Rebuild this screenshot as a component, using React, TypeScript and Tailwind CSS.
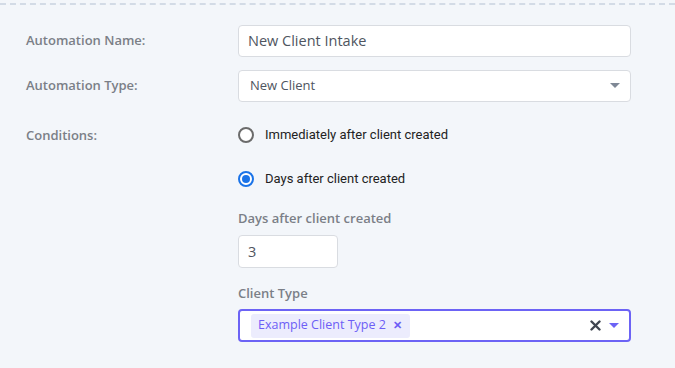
export default function App() {
  const label = "text-[13px] font-semibold text-[#7b7f87]";
  return (
    <div className="w-[675px] h-[368px] bg-[#f3f6fa] font-['Open_Sans',sans-serif] overflow-hidden">
      <div className="h-[3px]" />
      <div className="border-t-2 border-dashed border-[#d3dbe6]" />
      <div className="pl-[26px] pt-[20px] flex flex-col">
        {/* name */}
        <div className="flex items-center h-[32px]">
          <div className={`w-[212px] ${label}`}>Automation Name:</div>
          <div className="w-[393px] h-[32px] bg-white border border-[#d9dce1] rounded-[4px] flex items-center px-[9px] text-[14.5px] text-[#4f5560]">
            New Client Intake
          </div>
        </div>
        {/* type */}
        <div className="flex items-center h-[32px] mt-[13px]">
          <div className={`w-[212px] ${label}`}>Automation Type:</div>
          <div className="w-[393px] h-[32px] bg-white border border-[#d9dce1] rounded-[4px] flex items-center pl-[11px] pr-[10px] text-[13px] text-[#4f5560]">
            <span className="flex-1">New Client</span>
            <svg width="10" height="6" viewBox="0 0 10 6"><path d="M0 0h10L5 5z" fill="#7f8895" /></svg>
          </div>
        </div>
        {/* conditions */}
        <div className="flex mt-[23px]">
          <div className={`w-[212px] ${label} leading-[20px]`}>Conditions:</div>
          <div className="flex flex-col">
            <label className="flex items-center h-[20px] font-['Roboto',sans-serif] text-[13px] text-[#222]">
              <span className="w-[16px] h-[16px] rounded-full border-2 border-[#6b6b6b] bg-white mr-[11px]" />
              Immediately after client created
            </label>
            <label className="flex items-center h-[20px] mt-[24px] font-['Roboto',sans-serif] text-[13px] text-[#222]">
              <span className="w-[16px] h-[16px] rounded-full border-2 border-[#1a73e8] bg-white mr-[11px] flex items-center justify-center">
                <span className="w-[8px] h-[8px] rounded-full bg-[#1a73e8]" />
              </span>
              Days after client created
            </label>
            <div className={`${label} mt-[20px] leading-[18px]`}>Days after client created</div>
            <div className="w-[100px] h-[33px] mt-[8px] bg-white border border-[#d9dce1] rounded-[4px] flex items-center px-[9px] text-[14.5px] text-[#4f5560]">
              3
            </div>
            <div className={`${label} mt-[16px] leading-[18px]`}>Client Type</div>
            <div className="w-[393px] h-[33px] mt-[7px] bg-white border-2 border-[#6c63f5] rounded-[4px] flex items-center pl-[11px] pr-[10px]">
              <div className="flex-1 flex">
                <span className="h-[24px] bg-[#ececfd] rounded-[3px] flex items-center pl-[7px] pr-[8px] text-[12.5px] text-[#6d5ef6]">
                  Example Client Type 2
                  <span className="ml-[7px] text-[11px] font-bold">✕</span>
                </span>
              </div>
              <svg width="11" height="11" viewBox="0 0 11 11" className="mr-[8px]">
                <path d="M1.5 1.5l8 8M9.5 1.5l-8 8" stroke="#3f4550" strokeWidth="2.4" strokeLinecap="round" />
              </svg>
              <svg width="10" height="6" viewBox="0 0 10 6"><path d="M0 0h10L5 5z" fill="#6c63f5" /></svg>
            </div>
          </div>
        </div>
      </div>
    </div>
  );
}
